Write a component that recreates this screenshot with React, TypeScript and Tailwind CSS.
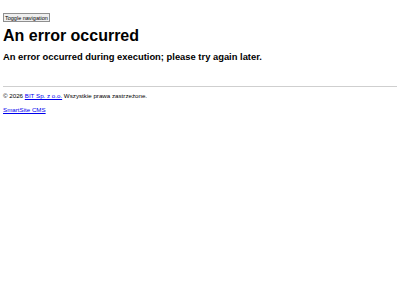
export default function App() {
  return (
    <div className="min-h-[300px] w-[400px] bg-white px-[3px] text-black" style={{ fontFamily: '"Liberation Sans", Arial, sans-serif' }}>
      <div className="pt-[13px]">
        <button className="block h-[7px] border border-[#8f8f8f] bg-[#efefef] px-[1px] text-[5.5px] leading-[6px] text-black" style={{ boxSizing: "content-box" }}>
          Toggle navigation
        </button>
      </div>
      <h1 className="mt-[5px] text-[16px] font-bold leading-[18px]">An error occurred</h1>
      <h3 className="mt-[6px] text-[9.4px] font-bold leading-[11px]">An error occurred during execution; please try again later.</h3>
      <hr className="mt-[24px] border-t border-[#cfcfcf]" />
      <p className="mt-[5px] text-[6.2px] leading-[8px]">
        © 2026 <a href="#" className="text-[#0000ee] underline">BIT Sp. z o.o.</a> Wszystkie prawa zastrzeżone.
      </p>
      <p className="mt-[6px] text-[6.2px] leading-[8px]">
        <a href="#" className="text-[#0000ee] underline">SmartSite CMS</a>
      </p>
    </div>
  );
}
